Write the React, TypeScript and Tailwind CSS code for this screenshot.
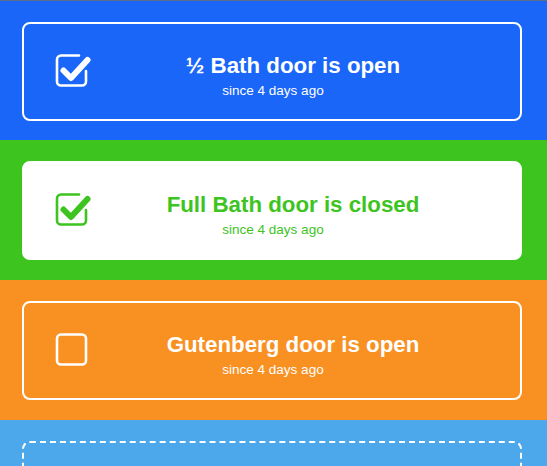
import React from "react";

type Item = {
  title: string;
  bg: string;
  card: string;
  color: string;
  checked: boolean;
};

function CheckIcon({ checked, color }: { checked: boolean; color: string }) {
  return (
    <svg width="40" height="40" viewBox="0 0 40 40" fill="none">
      {checked ? (
        <>
          <path
            d="M25 3.5 H7 a4 4 0 0 0 -4 4 V29.5 a4 4 0 0 0 4 4 H28 a4 4 0 0 0 4 -4 V19"
            stroke={color}
            strokeWidth="2.6"
            strokeLinecap="round"
          />
          <path
            d="M9.5 18.5 L17 26 L33.5 8"
            stroke={color}
            strokeWidth="6"
            strokeLinecap="round"
            strokeLinejoin="round"
          />
        </>
      ) : (
        <rect x="3" y="3.5" width="29" height="30" rx="4" stroke={color} strokeWidth="2.6" />
      )}
    </svg>
  );
}

function Card({ item }: { item: Item }) {
  return (
    <div className={`h-[140px] pt-[21px] pl-[22px] pr-[25px] ${item.bg}`}>
      <div className={`h-[99px] rounded-[8px] flex items-center ${item.card}`}>
        <div className="pl-[30px] shrink-0 flex">
          <CheckIcon checked={item.checked} color={item.color} />
        </div>
        <div className="flex-1 pr-[28px] pt-[8px] text-center" style={{ color: item.color }}>
          <div className="text-[22.3px] leading-[26px] font-bold whitespace-nowrap">{item.title}</div>
          <div className="mt-[4px] mr-[40px] text-[13.5px] leading-[16px]">since 4 days ago</div>
        </div>
      </div>
    </div>
  );
}

export default function App() {
  const items: Item[] = [
    { title: "½ Bath door is open", bg: "bg-[#1966f9] border-t border-[#5d6e85]", card: "border-2 border-white", color: "#ffffff", checked: true },
    { title: "Full Bath door is closed", bg: "bg-[#3dc41e]", card: "bg-white border-2 border-white", color: "#3dc41e", checked: true },
    { title: "Gutenberg door is open", bg: "bg-[#f99022]", card: "border-2 border-white", color: "#ffffff", checked: false },
  ];
  return (
    <div className="w-[547px] h-[466px] overflow-hidden" style={{ fontFamily: '"Liberation Sans", Arial, sans-serif' }}>
      {items.map((it) => (
        <Card key={it.title} item={it} />
      ))}
      <div className="h-[140px] pt-[21px] pl-[22px] pr-[25px] bg-[#4da8eb]">
        <div className="h-[99px] rounded-[8px] border-2 border-dashed border-white" />
      </div>
    </div>
  );
}
